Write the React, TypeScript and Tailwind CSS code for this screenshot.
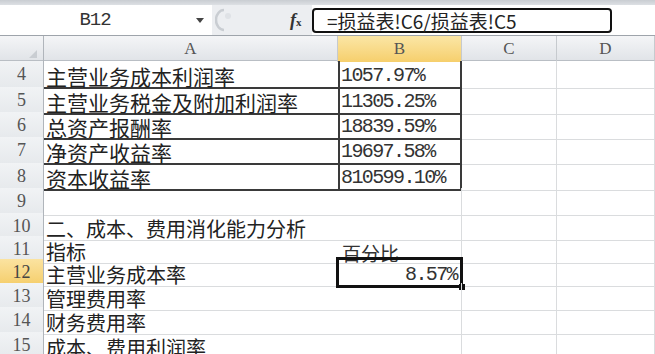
import React from "react";

type Row = {
  n: number;
  h: number;
  a?: string;
  b?: string;
  boxed?: boolean;
  selected?: boolean;
  big?: boolean;
};

const rows: Row[] = [
  { n: 4, h: 26, a: "主营业务成本利润率", b: "1057.97%", boxed: true, big: true },
  { n: 5, h: 25, a: "主营业务税金及附加利润率", b: "11305.25%", boxed: true, big: true },
  { n: 6, h: 25, a: "总资产报酬率", b: "18839.59%", boxed: true, big: true },
  { n: 7, h: 26, a: "净资产收益率", b: "19697.58%", boxed: true, big: true },
  { n: 8, h: 25, a: "资本收益率", b: "810599.10%", boxed: true, big: true },
  { n: 9, h: 25 },
  { n: 10, h: 23, a: "二、成本、费用消化能力分析" },
  { n: 11, h: 23, a: "指标", b: "百分比" },
  { n: 12, h: 24, a: "主营业务成本率", b: "8.57%", selected: true },
  { n: 13, h: 24, a: "管理费用率" },
  { n: 14, h: 25, a: "财务费用率" },
  { n: 15, h: 24, a: "成本、费用利润率" },
];

const cjk = "font-['SimSun','Noto_Sans_CJK_SC',sans-serif]";
const mono = "font-['Liberation_Mono','Noto_Sans_CJK_SC',monospace]";

function FormulaBar() {
  return (
    <div className="flex h-[30px] bg-[#eceef1]">
      {/* name box */}
      <div className="relative flex w-[212px] items-center bg-white">
        <span className={`${mono} w-[190px] text-center text-[19px] tracking-[-1px] text-[#333]`}>B12</span>
        <svg width="8" height="6" viewBox="0 0 8 6" className="absolute left-[196px] top-[13px]">
          <path d="M0 0 H8 L4 5 Z" fill="#444" />
        </svg>
      </div>
      {/* buttons */}
      <div className="relative flex w-[100px] items-center">
        <svg width="16" height="24" viewBox="0 0 16 24" className="absolute left-[3px] top-[3px]">
          <path d="M9 2 A 8 10 0 0 0 9 22" fill="none" stroke="#c9cdd2" strokeWidth="2.5" />
          <circle cx="13" cy="8" r="3" fill="#dfe2e6" />
        </svg>
        <span className="absolute left-[78px] top-[2px] font-['Liberation_Serif',serif] text-[18px] font-bold italic text-[#333]">
          f<span className="text-[11px] not-italic">x</span>
        </span>
      </div>
      {/* formula */}
      <div className="flex w-[300px] items-center bg-white py-[3px]">
        <div className="flex h-[25px] w-full items-center rounded-[4px] border-2 border-[#111] pl-[13px]">
          <span className={`${cjk} text-[19px] leading-none text-[#222]`}>=损益表!C6/损益表!C5</span>
        </div>
      </div>
      <div className="flex-1 bg-white" />
    </div>
  );
}

function Header() {
  const col = "flex items-center justify-center border-r border-[#c6cace] text-[17px] text-[#555] font-['Liberation_Serif',serif]";
  return (
    <div className="grid h-[25px] grid-cols-[44px_294px_124px_95px_98px] border-b border-[#b9bec4] bg-gradient-to-b from-[#f4f5f7] to-[#e1e4e8]">
      <div className="relative border-r border-[#b0b5bb]">
        <svg width="8" height="8" viewBox="0 0 8 8" className="absolute bottom-[4px] right-[6px]">
          <path d="M8 0 V8 H0 Z" fill="#c9cdd2" />
        </svg>
      </div>
      <div className={col}>A</div>
      <div className={`${col} bg-gradient-to-b from-[#fbe6a5] to-[#f6cf6c] text-[#444]`}>B</div>
      <div className={col}>C</div>
      <div className={col}>D</div>
    </div>
  );
}

function GridRow({ r }: { r: Row }) {
  const grid = "border-[#dadcde]";
  const dark = "border-[#3a3a3a]";
  const textSize = r.big ? "text-[21px]" : "text-[20px]";
  return (
    <div
      className="grid grid-cols-[44px_294px_124px_95px_98px]"
      style={{ height: r.h }}
    >
      <div
        className={`flex items-center justify-center border-r border-b border-r-[#b0b5bb] border-b-[#d3d7dc] font-['Liberation_Serif',serif] text-[18px] ${
          r.selected
            ? "bg-gradient-to-b from-[#fbe3a0] to-[#f5cd68] text-[#444]"
            : "bg-gradient-to-b from-[#f1f3f5] to-[#e6e9ec] text-[#555]"
        }`}
      >
        {r.n}
      </div>
      <div
        className={`flex items-end overflow-visible whitespace-nowrap pl-[2px] pb-[1px] ${cjk} ${textSize} leading-[20px] text-[#222] ${
          r.boxed ? `border-b-2 ${dark}` : `border-b ${grid}`
        }`}
      >
        {r.a}
      </div>
      <div
        className={`relative flex items-end whitespace-nowrap pb-[1px] ${
          r.boxed
            ? `border-x-2 border-b-2 ${dark} pl-[1px] ${mono} text-[20px] tracking-[-1.6px] leading-[20px]`
            : `border-r border-b ${grid}`
        } ${r.selected ? `justify-end pr-[4px] ${mono} text-[20px] tracking-[-1.6px] leading-[20px]` : ""} ${
          r.n === 11 ? `pl-[4px] ${cjk} text-[19px] leading-[19px]` : ""
        } text-[#333]`}
      >
        {r.b}
        {r.selected && (
          <>
            <div className="pointer-events-none absolute inset-[-2px] border-[3px] border-[#111]" />
            <div className="absolute bottom-[-4px] right-[-4px] h-[6px] w-[6px] bg-[#111]" />
          </>
        )}
      </div>
      <div className={`border-r border-b ${grid}`} />
      <div className={`border-r border-b ${grid}`} />
    </div>
  );
}

export default function App() {
  return (
    <div className="h-[354px] w-[655px] overflow-hidden bg-white">
      <div className="h-[5px] bg-gradient-to-b from-[#c9cdd2] to-[#dde0e4]" />
      <FormulaBar />
      <div className="h-px bg-[#9ea4ab]" />
      <Header />
      {rows.map((r) => (
        <GridRow key={r.n} r={r} />
      ))}
    </div>
  );
}
